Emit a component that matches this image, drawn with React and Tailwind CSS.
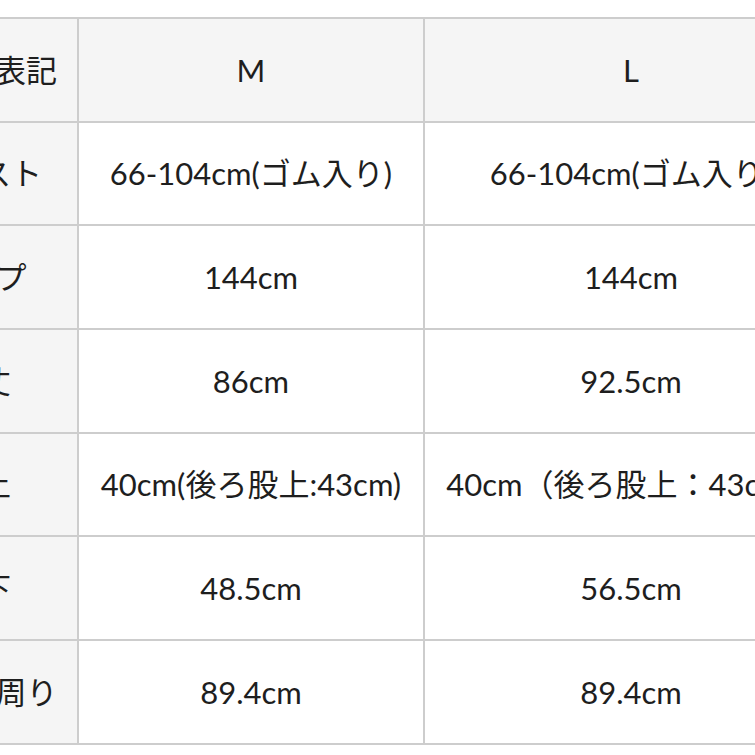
import React from "react";

const rows = [
  ["サイズ表記", "M", "L"],
  ["ウエスト", "66-104cm(ゴム入り)", "66-104cm(ゴム入り)"],
  ["ヒップ", "144cm", "144cm"],
  ["総丈", "86cm", "92.5cm"],
  ["股上", "40cm(後ろ股上:43cm)", "40cm（後ろ股上：43cm）"],
  ["股下", "48.5cm", "56.5cm"],
  ["ワタリ周り", "89.4cm", "89.4cm"],
];

export default function App() {
  return (
    <div
      className="w-[755px] h-[755px] overflow-hidden bg-white pt-[17px] text-[#1e1e1e]"
      style={{ fontFamily: 'Lato, "Noto Sans CJK JP", sans-serif' }}
    >
      <div className="ml-[-119px] w-[960px] grid grid-cols-[196px_346px_414px] border-t-2 border-l-2 border-[#cdcdcd]">
        {rows.map((r, i) =>
          r.map((c, j) => (
            <div
              key={i + "-" + j}
              className={
                "h-[103.7px] flex items-center justify-center border-r-2 border-b-2 border-[#cdcdcd] text-[31px] whitespace-nowrap overflow-hidden " +
                (i === 0 || j === 0 ? "bg-[#f5f5f5]" : "bg-white")
              }
            >
              {c}
            </div>
          ))
        )}
      </div>
    </div>
  );
}
